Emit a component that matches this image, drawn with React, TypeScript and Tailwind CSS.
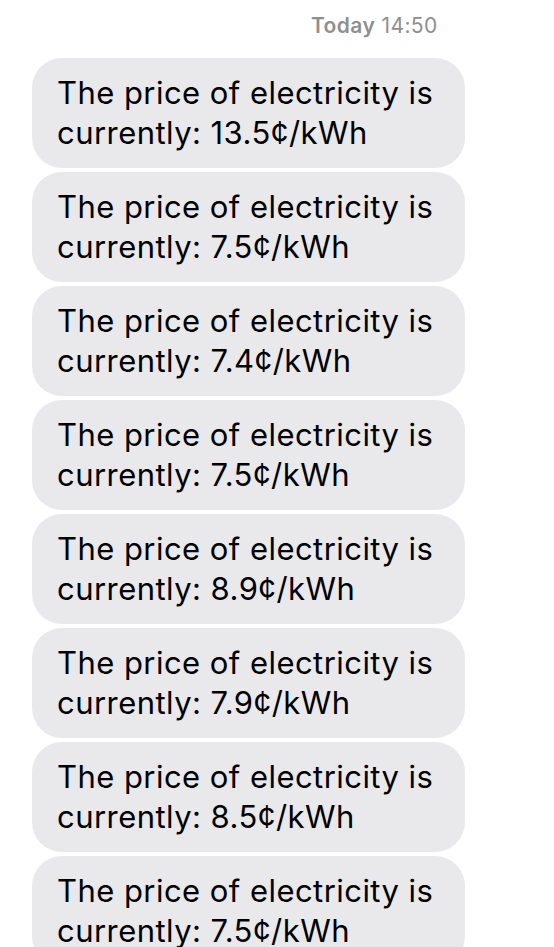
export default function App() {
  const prices = ["13.5", "7.5", "7.4", "7.5", "8.9", "7.9", "8.5", "7.5"];

  return (
    <div className="w-[554px] h-[947px] overflow-hidden bg-white font-['Inter',sans-serif]">
      {/* fecha */}
      <div className="h-[58px] pt-[11px] pl-[311px]">
        <span className="text-[21px] leading-[30px] tracking-[0.4px] text-[#8e8e93]">
          <span className="font-semibold">Today</span> 14:50
        </span>
      </div>

      <div className="flex flex-col gap-[4px] pl-[32px]">
        {prices.map((p, i) => (
          <div
            key={i}
            className="w-[433px] h-[110px] shrink-0 rounded-[30px] bg-[#e9e9eb] px-[25px] py-[15px] text-[31px] leading-[40px] tracking-[0.45px] text-black"
          >
            The price of electricity is
            <br />
            currently: {p}¢/kWh
          </div>
        ))}
      </div>
    </div>
  );
}
